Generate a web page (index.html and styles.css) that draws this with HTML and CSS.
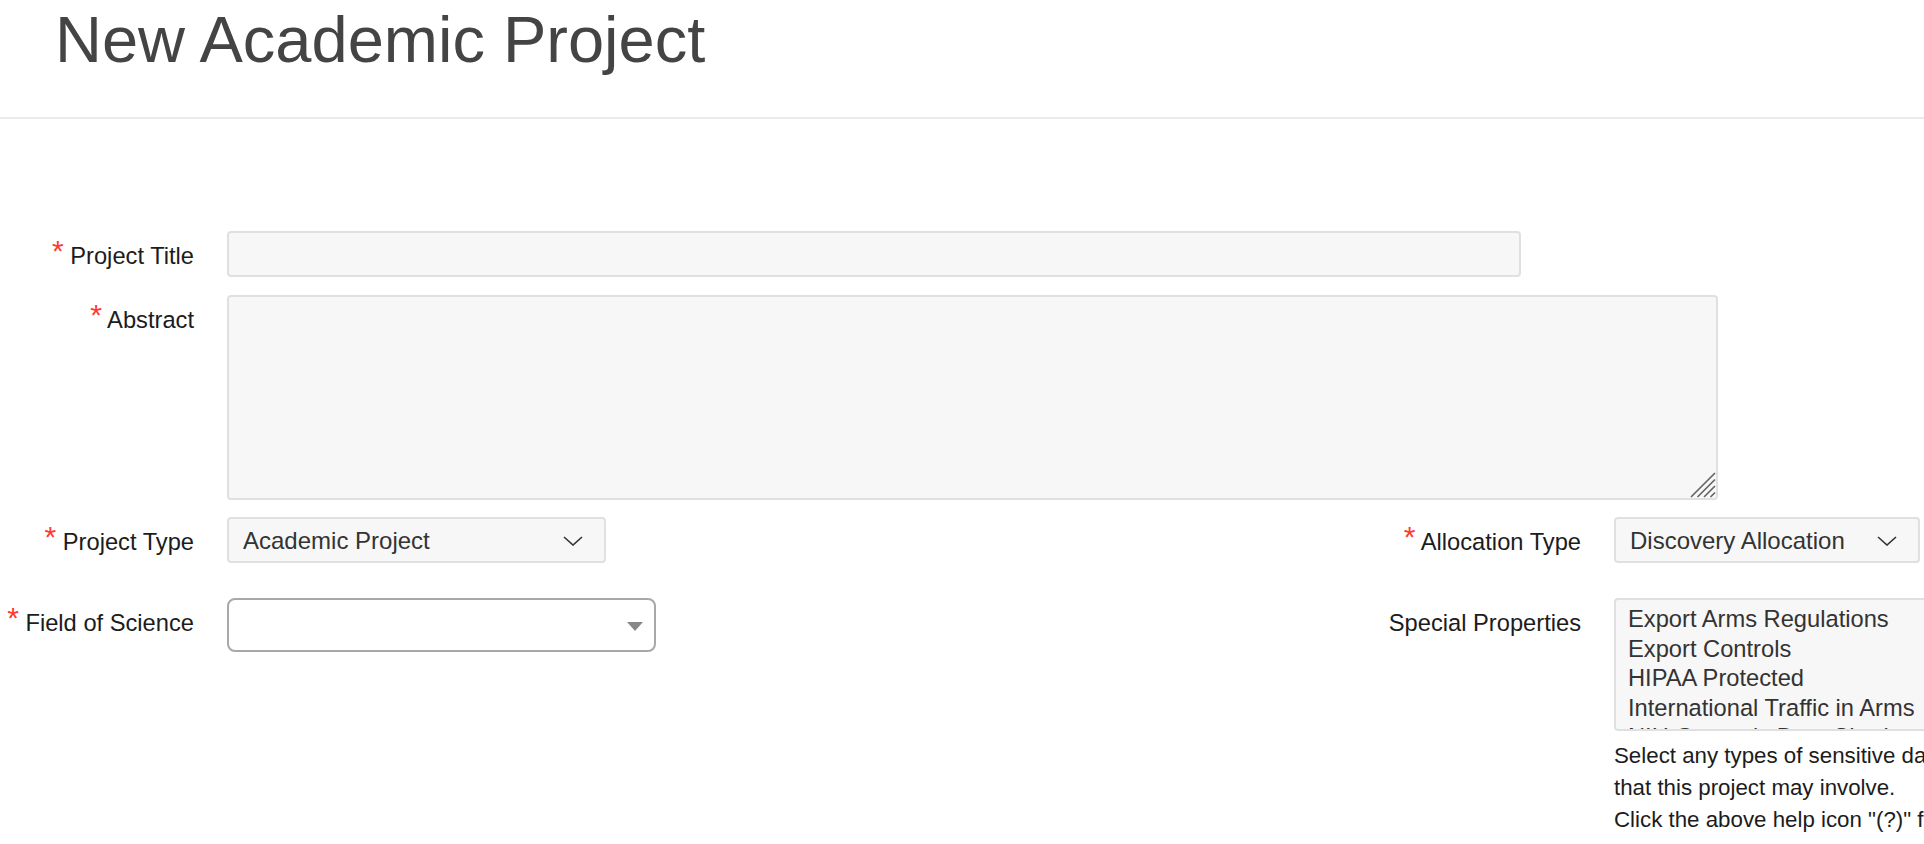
FILE: index.html
```html
<!DOCTYPE html>
<html lang="en">
<head>
<meta charset="utf-8">
<title>New Academic Project</title>
<link rel="stylesheet" href="styles.css">
</head>
<body>
<header class="page-header">
  <h1 class="page-title">New Academic Project</h1>
</header>

<form class="project-form">
  <div class="form-row row-title">
    <label class="field-label" for="project-title"><span class="req">*</span> Project Title</label>
    <div class="field field-wide">
      <input id="project-title" class="text-input title-input" type="text">
    </div>
  </div>

  <div class="form-row row-abstract">
    <label class="field-label" for="abstract"><span class="req">*</span> Abstract</label>
    <div class="field field-wide">
      <div class="textarea-wrap">
        <textarea id="abstract" class="text-area"></textarea>
        <svg class="resize-grip" width="26" height="26" viewBox="0 0 26 26" aria-hidden="true">
          <path d="M1 25 L25 1 M7.5 25 L25 7.5 M14 25 L25 14 M20.5 25 L25 20.5" stroke="#666" stroke-width="1.7" fill="none"/>
        </svg>
      </div>
    </div>
  </div>

  <div class="form-row row-types">
    <label class="field-label" for="project-type"><span class="req">*</span> Project Type</label>
    <div class="field">
      <div class="select-wrap type-select">
        <select id="project-type" class="select-input">
          <option>Academic Project</option>
        </select>
        <svg class="chevron" width="20" height="10" viewBox="0 0 20 10" aria-hidden="true">
          <path d="M1 1 L10 9 L19 1" stroke="#333" stroke-width="1.6" fill="none"/>
        </svg>
      </div>
    </div>
    <label class="field-label" for="allocation-type"><span class="req">*</span> Allocation Type</label>
    <div class="field">
      <div class="select-wrap alloc-select">
        <select id="allocation-type" class="select-input">
          <option>Discovery Allocation</option>
        </select>
        <svg class="chevron" width="20" height="10" viewBox="0 0 20 10" aria-hidden="true">
          <path d="M1 1 L10 9 L19 1" stroke="#333" stroke-width="1.6" fill="none"/>
        </svg>
      </div>
    </div>
  </div>

  <div class="form-row row-science">
    <label class="field-label" for="field-of-science"><span class="req">*</span> Field of Science</label>
    <div class="field">
      <div class="select-wrap science-select">
        <select id="field-of-science" class="select-input select-plain">
          <option></option>
        </select>
        <svg class="triangle" width="16" height="9" viewBox="0 0 16 9" aria-hidden="true">
          <path d="M0 0 L16 0 L8 9 Z" fill="#888"/>
        </svg>
      </div>
    </div>
    <label class="field-label">Special Properties</label>
    <div class="field">
      <div class="listbox" role="listbox" aria-multiselectable="true">
        <div class="listbox-option" role="option">Export Arms Regulations</div>
        <div class="listbox-option" role="option">Export Controls</div>
        <div class="listbox-option" role="option">HIPAA Protected</div>
        <div class="listbox-option" role="option">International Traffic in Arms</div>
        <div class="listbox-option" role="option">NIH Genomic Data Sharing</div>
      </div>
      <p class="help-text">Select any types of sensitive data<br>that this project may involve.<br>Click the above help icon "(?)" for more information.</p>
    </div>
  </div>
</form>
</body>
</html>
```

FILE: styles.css
```css
html, body {
  overflow: hidden;
}

body {
  margin: 0;
  background: #ffffff;
  font-family: "Liberation Sans", Arial, Helvetica, sans-serif;
  color: #1c1c1c;
}

.page-header {
  padding: 4px 0 41px 55px;
  border-bottom: 2px solid #ebebeb;
}

.page-title {
  margin: 0;
  font-size: 65px;
  line-height: 72px;
  font-weight: normal;
  color: #444444;
}

.project-form {
  padding-top: 112px;
}

.form-row {
  display: grid;
  grid-template-columns: 194px 1127px 194px 1fr;
  column-gap: 33px;
  align-items: start;
}

.row-title { margin-bottom: 18px; }
.row-abstract { margin-bottom: 17px; }
.row-types { margin-bottom: 35px; }

.field-label {
  display: block;
  height: 44px;
  padding-top: 2px;
  text-align: right;
  white-space: nowrap;
  font-size: 23.7px;
  line-height: 46px;
  color: #1c1c1c;
}

.req {
  color: #ff3b30;
  font-size: 30px;
  line-height: 0;
  vertical-align: 3px;
}

.field-wide {
  grid-column: 2 / -1;
}

.text-input,
.text-area,
.select-input {
  box-sizing: border-box;
  display: block;
  border: 2px solid #e0e0e0;
  border-radius: 4px;
  background: #f7f7f7;
  font-family: "Liberation Sans", Arial, Helvetica, sans-serif;
  font-size: 24px;
  color: #333333;
  outline: none;
}

.title-input {
  width: 1294px;
  height: 46px;
  padding: 0 14px;
}

.textarea-wrap {
  position: relative;
  width: 1491px;
}

.text-area {
  width: 1491px;
  height: 205px;
  padding: 8px 14px;
  resize: none;
}

.resize-grip {
  position: absolute;
  right: 2px;
  bottom: 2px;
}

.select-wrap {
  position: relative;
}

.type-select { width: 379px; }
.alloc-select { width: 306px; }
.science-select { width: 429px; }

.select-input {
  -webkit-appearance: none;
  appearance: none;
  width: 100%;
  height: 46px;
  padding: 0 50px 0 14px;
}

.select-plain {
  height: 54px;
  background: #ffffff;
  border-color: #a8a8a8;
  border-radius: 8px;
}

.chevron {
  position: absolute;
  right: 23px;
  top: 19px;
  pointer-events: none;
}

.triangle {
  position: absolute;
  right: 13px;
  top: 24px;
  pointer-events: none;
}

.listbox {
  box-sizing: border-box;
  width: 420px;
  height: 133px;
  padding: 5px 12px;
  border: 2px solid #e0e0e0;
  border-radius: 4px;
  background: #f7f7f7;
  overflow: hidden;
  font-size: 23.7px;
  line-height: 29.5px;
  color: #333333;
}

.listbox-option {
  white-space: nowrap;
}

.help-text {
  margin: 9px 0 0;
  font-size: 22.3px;
  line-height: 32px;
  white-space: nowrap;
  color: #1c1c1c;
}
```
